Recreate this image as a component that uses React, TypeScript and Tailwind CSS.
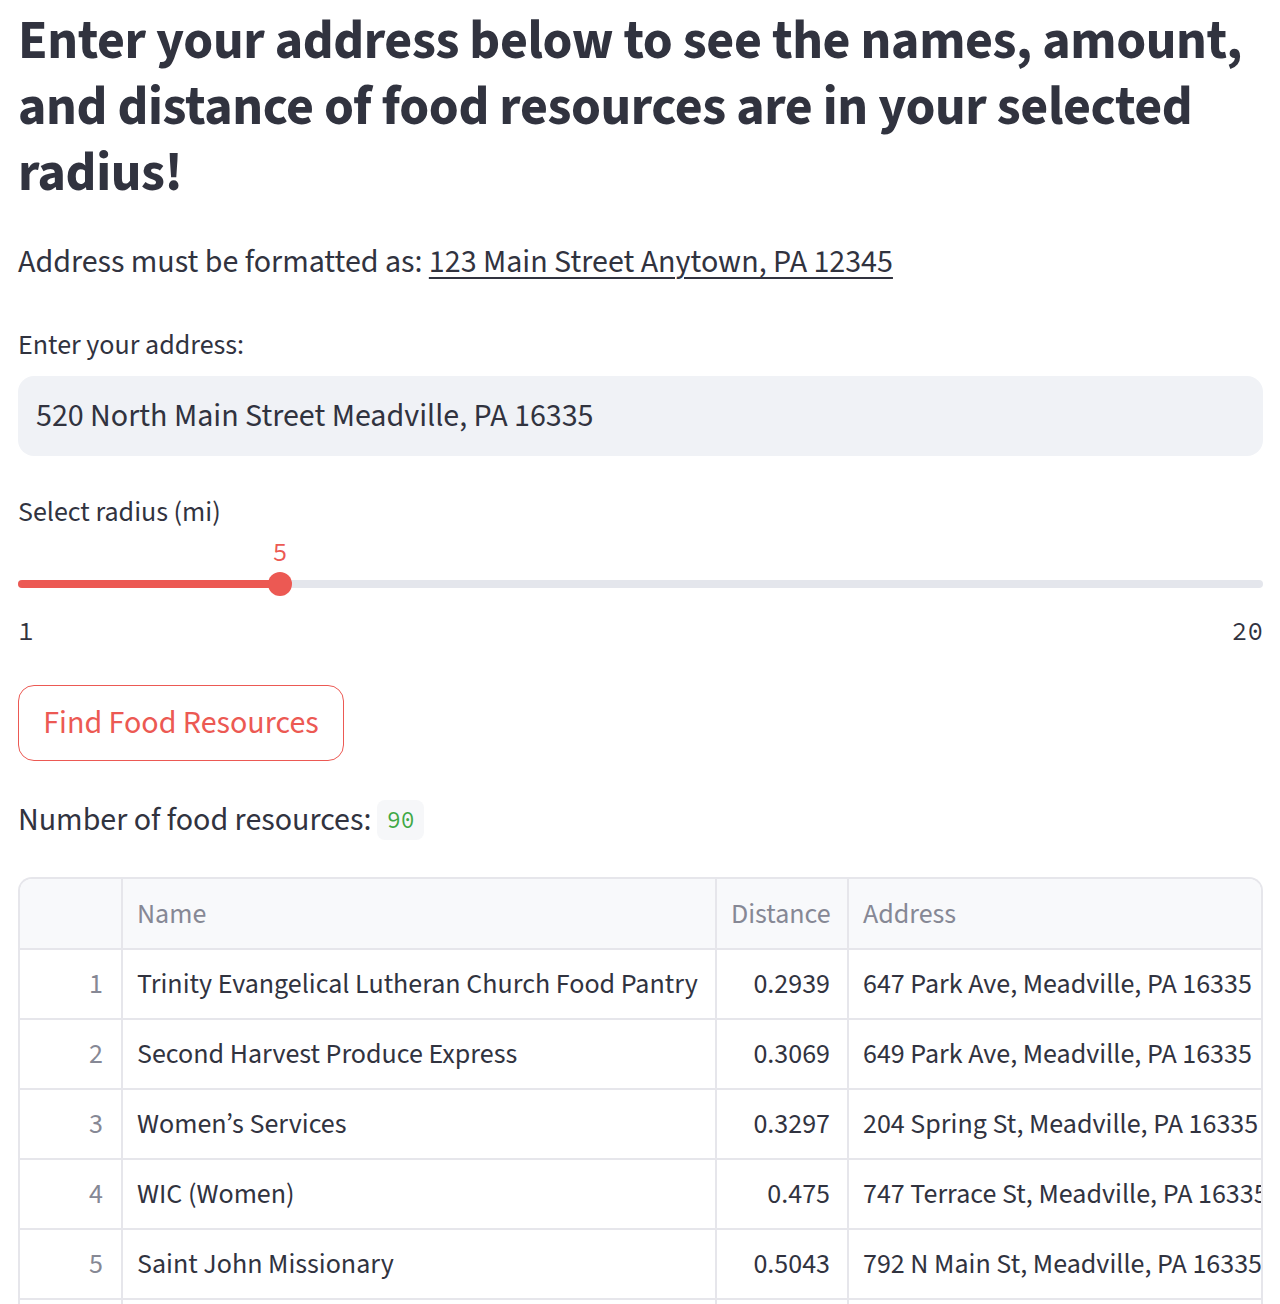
const rows = [
  { i: 1, name: "Trinity Evangelical Lutheran Church Food Pantry", dist: "0.2939", addr: "647 Park Ave, Meadville, PA 16335" },
  { i: 2, name: "Second Harvest Produce Express", dist: "0.3069", addr: "649 Park Ave, Meadville, PA 16335" },
  { i: 3, name: "Women\u2019s Services", dist: "0.3297", addr: "204 Spring St, Meadville, PA 16335" },
  { i: 4, name: "WIC (Women)", dist: "0.475", addr: "747 Terrace St, Meadville, PA 16335" },
  { i: 5, name: "Saint John Missionary", dist: "0.5043", addr: "792 N Main St, Meadville, PA 16335" },
  { i: 6, name: "Meadville Area Food Pantry", dist: "0.6121", addr: "1034 Park Ave, Meadville, PA 16335" },
];

export default function App() {
  return (
    <div className="min-h-screen bg-white text-[#31333f] font-['Source_Sans_Pro','Source_Sans_3',Lato,sans-serif]">
      <div className="pl-[18px] pr-[17px] pt-[9px]">
        {/* Title */}
        <h1 className="text-[54px] font-bold leading-[66px] tracking-[-0.4px]">
          Enter your address below to see the names, amount,
          <br />
          and distance of food resources are in your selected
          <br />
          radius!
        </h1>

        <p className="mt-[35px] text-[32px] leading-[40px]">
          Address must be formatted as: <span className="underline underline-offset-[5px] decoration-[2px]">123 Main Street Anytown, PA 12345</span>
        </p>

        {/* Address input */}
        <label className="mt-[45px] block text-[28px] leading-[36px]">Enter your address:</label>
        <div className="mt-[13px] flex h-[80px] items-center rounded-[16px] bg-[#f0f2f6] px-[18px] text-[32px]">
          520 North Main Street Meadville, PA 16335
        </div>

        {/* Radius slider */}
        <label className="mt-[38px] block text-[28px] leading-[36px]">Select radius (mi)</label>
        <div className="relative mt-[8px] h-[28px]">
          <span className="absolute left-[21.05%] -translate-x-1/2 font-['Source_Code_Pro','DejaVu_Sans_Mono',monospace] text-[25px] leading-[28px] text-[#ec5953]">5</span>
        </div>
        <div className="relative mt-[6px] flex h-[24px] items-center">
          <div className="h-[8px] w-full rounded-full bg-[#e4e6ec]">
            <div className="h-full w-[21.05%] rounded-full bg-[#ec5953]" />
          </div>
          <div className="absolute left-[21.05%] h-[24px] w-[24px] -translate-x-1/2 rounded-full bg-[#ec5953]" />
        </div>
        <div className="mt-[21px] flex justify-between font-['Source_Code_Pro','DejaVu_Sans_Mono',monospace] text-[26px] leading-[28px]">
          <span>1</span>
          <span>20</span>
        </div>

        {/* Button */}
        <button className="mt-[40px] flex h-[76px] w-[326px] items-center justify-center rounded-[16px] border-[1.5px] border-[#ec5953] bg-white text-[32px] text-[#ec5953]">
          Find Food Resources
        </button>

        {/* Count */}
        <div className="mt-[39px] flex h-[40px] items-center text-[32px]">
          <span>Number of food resources:</span>
          <span className="ml-[6px] inline-flex h-[40px] w-[47px] items-center justify-center rounded-[8px] bg-[#f6f7f9] font-['Source_Code_Pro','DejaVu_Sans_Mono',monospace] text-[23px] text-[#3fa845]">
            90
          </span>
        </div>

        {/* Table */}
        <div className="mt-[37px] overflow-hidden rounded-t-[14px] border-2 border-b-0 border-[#e6e6eb] text-[28px]">
          <div className="grid h-[71px] grid-cols-[101px_594px_132px_1fr] border-b-2 border-[#e6e6eb] bg-[#f8f9fb] text-[#868895]">
            <div />
            <div className="flex items-center border-l-2 border-[#e6e6eb] px-[14px]">Name</div>
            <div className="flex items-center border-l-2 border-[#e6e6eb] px-[14px]">Distance</div>
            <div className="flex items-center border-l-2 border-[#e6e6eb] px-[14px]">Address</div>
          </div>
          {rows.map((r) => (
            <div key={r.i} className="grid h-[70px] grid-cols-[101px_594px_132px_1fr] border-b-2 border-[#e6e6eb]">
              <div className="flex items-center justify-end pr-[18px] text-[#868895]">{r.i}</div>
              <div className="flex items-center overflow-hidden whitespace-nowrap border-l-2 border-[#e6e6eb] px-[14px]">{r.name}</div>
              <div className="flex items-center justify-end border-l-2 border-[#e6e6eb] pr-[17px]">{r.dist}</div>
              <div className="flex items-center overflow-hidden whitespace-nowrap border-l-2 border-[#e6e6eb] pl-[14px]">{r.addr}</div>
            </div>
          ))}
        </div>
      </div>
    </div>
  );
}
